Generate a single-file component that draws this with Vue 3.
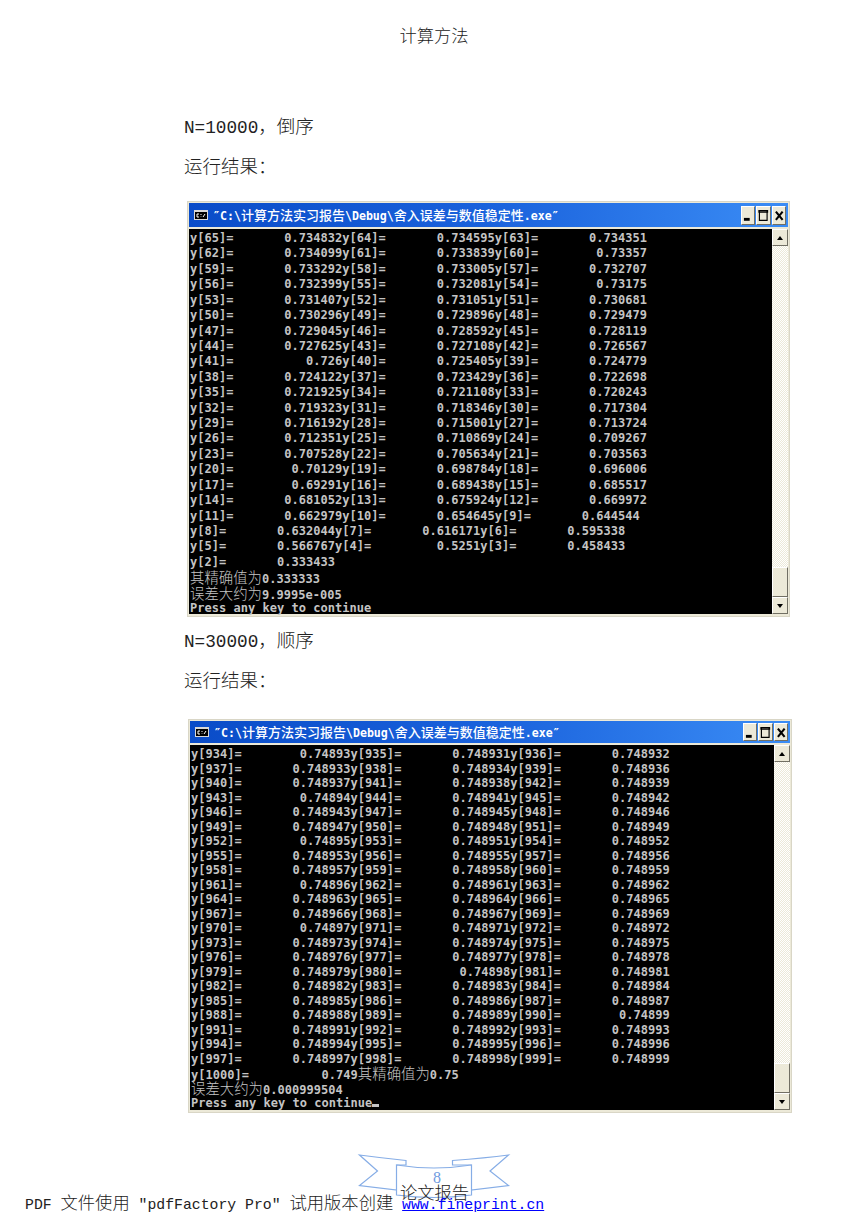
<script setup>
const row = (items) =>
  items.map(([i, v]) => `y[${i}]=` + String(v).padStart(15, ' ')).join('')

const split = (s) =>
  s.split(/([\u4e00-\u9fff，：]+)/).filter(Boolean).map((t) => ({ t, cjk: /[\u4e00-\u9fff，：]/.test(t) }))

const firstValues = `65 0.734832 64 0.734595 63 0.734351
62 0.734099 61 0.733839 60 0.73357
59 0.733292 58 0.733005 57 0.732707
56 0.732399 55 0.732081 54 0.73175
53 0.731407 52 0.731051 51 0.730681
50 0.730296 49 0.729896 48 0.729479
47 0.729045 46 0.728592 45 0.728119
44 0.727625 43 0.727108 42 0.726567
41 0.726 40 0.725405 39 0.724779
38 0.724122 37 0.723429 36 0.722698
35 0.721925 34 0.721108 33 0.720243
32 0.719323 31 0.718346 30 0.717304
29 0.716192 28 0.715001 27 0.713724
26 0.712351 25 0.710869 24 0.709267
23 0.707528 22 0.705634 21 0.703563
20 0.70129 19 0.698784 18 0.696006
17 0.69291 16 0.689438 15 0.685517
14 0.681052 13 0.675924 12 0.669972
11 0.662979 10 0.654645 9 0.644544
8 0.632044 7 0.616171 6 0.595338
5 0.566767 4 0.5251 3 0.458433
2 0.333433`

const secondValues = `934 0.74893 935 0.748931 936 0.748932
937 0.748933 938 0.748934 939 0.748936
940 0.748937 941 0.748938 942 0.748939
943 0.74894 944 0.748941 945 0.748942
946 0.748943 947 0.748945 948 0.748946
949 0.748947 950 0.748948 951 0.748949
952 0.74895 953 0.748951 954 0.748952
955 0.748953 956 0.748955 957 0.748956
958 0.748957 959 0.748958 960 0.748959
961 0.74896 962 0.748961 963 0.748962
964 0.748963 965 0.748964 966 0.748965
967 0.748966 968 0.748967 969 0.748969
970 0.74897 971 0.748971 972 0.748972
973 0.748973 974 0.748974 975 0.748975
976 0.748976 977 0.748977 978 0.748978
979 0.748979 980 0.74898 981 0.748981
982 0.748982 983 0.748983 984 0.748984
985 0.748985 986 0.748986 987 0.748987
988 0.748988 989 0.748989 990 0.74899
991 0.748991 992 0.748992 993 0.748993
994 0.748994 995 0.748995 996 0.748996
997 0.748997 998 0.748998 999 0.748999`

const parse = (block) =>
  block.split('\n').map((line) => {
    const p = line.trim().split(' ')
    const items = []
    for (let i = 0; i < p.length; i += 2) items.push([p[i], p[i + 1]])
    return row(items)
  })

const title = '″C:\\计算方法实习报告\\Debug\\舍入误差与数值稳定性.exe″'

const sections = [
  {
    heading: 'N=10000，倒序',
    variant: 'first',
    lines: [
      ...parse(firstValues),
      '其精确值为0.333333',
      '误差大约为9.9995e-005',
      'Press any key to continue',
    ],
    tail: 3,
  },
  {
    heading: 'N=30000，顺序',
    variant: 'second',
    lines: [
      ...parse(secondValues),
      row([['1000', '0.749']]) + '其精确值为0.75',
      '误差大约为0.000999504',
      'Press any key to continue',
    ],
    tail: 3,
    cursor: true,
  },
]
</script>

<template>
  <div class="page">
    <header class="running-head">计算方法</header>

    <section v-for="s in sections" :key="s.variant" class="section" :class="s.variant">
      <p class="body-line">
        <span v-for="(p, i) in split(s.heading)" :key="i" :class="{ han: p.cjk, latin: !p.cjk }">{{ p.t }}</span>
      </p>
      <p class="body-line second-line"><span class="han">运行结果：</span></p>

      <div class="window">
        <div class="titlebar">
          <svg class="app-icon" viewBox="0 0 14 10" width="14" height="10">
            <rect width="14" height="10" fill="#d8d8d8" />
            <rect x="1" y="2" width="12" height="7" fill="#000" />
            <path d="M3 4h2M3 4v3M3 7h2M7 4v1M7 6.5v.5M9 7l2-3" stroke="#fff" stroke-width="1" fill="none" />
          </svg>
          <span class="title-text">
            <span v-for="(p, i) in split(title)" :key="i" :class="{ 'title-han': p.cjk }">{{ p.t }}</span>
          </span>
          <div class="caption-buttons">
            <button class="cap">
              <svg viewBox="0 0 13 17" width="13" height="17"><rect x="2" y="11" width="6" height="3" fill="#000" /></svg>
            </button>
            <button class="cap">
              <svg viewBox="0 0 13 17" width="13" height="17"><path d="M2 3.5h9v1.5h-9zM2.5 4v9.5h8V4" fill="none" stroke="#000" stroke-width="1.2" /></svg>
            </button>
            <button class="cap">
              <svg viewBox="0 0 13 17" width="13" height="17"><path d="M3 4.5l7 8.5M10 4.5l-7 8.5" fill="none" stroke="#000" stroke-width="2.2" /></svg>
            </button>
          </div>
        </div>
        <div class="client">
          <div class="console">
            <div
              v-for="(line, li) in s.lines"
              :key="li"
              class="console-line"
              :class="{ tail: li >= s.lines.length - s.tail }"
            >
              <span v-for="(p, i) in split(line)" :key="i" :class="{ 'console-han': p.cjk }">{{ p.t }}</span>
              <span v-if="s.cursor && li === s.lines.length - 1" class="cursor"></span>
            </div>
          </div>
          <div class="scrollbar">
            <div class="arrow up"><span class="tri-up"></span></div>
            <div class="track"></div>
            <div class="thumb"></div>
            <div class="arrow"><span class="tri-down"></span></div>
          </div>
        </div>
      </div>
    </section>

    <svg class="ribbon" viewBox="0 0 190 60" width="190" height="60">
      <g fill="#fff" stroke="#86ade6" stroke-width="1.2" stroke-linejoin="miter">
        <path d="M19.5 10 Q42 13 66 15.5 V20 H57 V45 L19.5 40.5 L37.5 26 Z" />
        <path d="M168.5 10 Q146 13 112.5 15.5 V20 H131 V45 L168.5 40.5 L150 26 Z" />
        <path d="M56.5 20 Q94 26 131.5 20 V50 Q94 55 56.5 50 Z" />
      </g>
      <text x="97" y="38" text-anchor="middle" class="ribbon-number">8</text>
    </svg>

    <div class="ribbon-caption">论文报告</div>

    <footer class="watermark">
      <span class="latin-small">PDF{{ ' ' }}</span><span class="han-small">文件使用</span><span class="latin-small">{{ ' ″pdfFactory Pro″ ' }}</span><span class="han-small">试用版本创建</span><span class="latin-small">{{ ' ' }}</span><a class="latin-small link" href="#">www.fineprint.cn</a>
    </footer>
  </div>
</template>

<style>
html, body { margin: 0; background: #fff; }
</style>

<style scoped>
.page {
  position: relative;
  width: 868px;
  height: 1228px;
  overflow: hidden;
  background: #fff;
  color: #222;
  font-family: "Liberation Mono", "Noto Sans CJK SC", monospace;
  padding-top: 25px;
  box-sizing: border-box;
}

.running-head {
  text-align: center;
  font-family: "Noto Sans CJK SC", sans-serif;
  font-weight: 300;
  font-size: 17.3px;
  line-height: 20px;
  width: 868px;
}

.section { padding-left: 184px; }
.section.first { padding-top: 60px; }
.section.second { padding-top: 2px; }

.body-line {
  margin: 0;
  height: 40px;
  line-height: 40px;
  white-space: pre;
}
.first .second-line { margin-bottom: 16px; }
.second .second-line { margin-bottom: 20px; }

.han {
  font-family: "Noto Sans CJK SC", sans-serif;
  font-weight: 300;
  font-size: 18.5px;
}
.latin { font-size: 17.7px; }

.window {
  box-sizing: border-box;
  background: #ece9d8;
  border: 1px solid #d9d6c6;
  margin-left: 3px;
  padding: 1px 1px 2px;
}
.first .window { width: 603px; height: 416px; }
.second .window { width: 604px; height: 394px; margin-left: 4px; }

.titlebar {
  display: flex;
  align-items: center;
  height: 24px;
  background: linear-gradient(90deg, #0a4cc8 0%, #1a62dc 50%, #3a8cf5 100%);
  padding: 0 2px 0 5px;
  box-sizing: border-box;
}
.second .titlebar { height: 22px; }

.app-icon { flex: none; margin-right: 5px; }

.title-text {
  flex: 1;
  color: #fff;
  font-family: "DejaVu Sans Mono", monospace;
  font-weight: 700;
  font-size: 11.6px;
  white-space: pre;
  line-height: 18px;
}
.title-han {
  font-family: "Noto Sans CJK SC", sans-serif;
  font-weight: 500;
  font-size: 13px;
}

.caption-buttons { display: flex; gap: 1px; }
.cap {
  width: 14.5px;
  height: 19px;
  padding: 0;
  border: 1px solid;
  border-color: #fff #716f64 #716f64 #fff;
  background: #ece9d8;
  display: flex;
  align-items: center;
  justify-content: center;
  overflow: hidden;
}
.second .cap { height: 18px; }

.client {
  display: flex;
  height: 385px;
  margin-top: 2px;
  background: #000;
}
.second .client { height: 365px; }

.console {
  flex: 1;
  padding: 2px 0 0 1px;
  min-width: 0;
  color: #c4c4c4;
  font-family: "DejaVu Sans Mono", monospace;
  font-weight: 700;
  font-size: 12px;
  letter-spacing: 0.03px;
  white-space: pre;
}
.console-line { height: 15.43px; line-height: 15.43px; }
.second .console { padding-top: 2px; }
.second .console-line { height: 14.52px; line-height: 14.52px; }
.second .console-line.tail { height: 15px; line-height: 15px; }

.console-han {
  font-family: "Noto Sans CJK SC", sans-serif;
  font-weight: 300;
  font-size: 14.4px;
  line-height: 1;
  letter-spacing: 0;
}
.cursor {
  display: inline-block;
  width: 7px;
  height: 3px;
  background: #c4c4c4;
  vertical-align: baseline;
}

.scrollbar {
  flex: none;
  width: 16px;
  display: flex;
  flex-direction: column;
  background: #fff;
}
.arrow {
  flex: none;
  height: 17px;
  box-sizing: border-box;
  background: #ece9d8;
  border: 1px solid;
  border-color: #fff #716f64 #716f64 #fff;
  display: flex;
  align-items: center;
  justify-content: center;
}
.tri-up, .tri-down { width: 0; height: 0; border-left: 3.5px solid transparent; border-right: 3.5px solid transparent; }
.tri-up { border-bottom: 4px solid #000; }
.tri-down { border-top: 4px solid #000; }
.track {
  flex: 1;
  background: repeating-conic-gradient(#ece9d8 0 25%, #fff 0 50%) 0 0 / 2px 2px;
}
.thumb {
  flex: none;
  height: 30px;
  box-sizing: border-box;
  background: #ece9d8;
  border: 1px solid;
  border-color: #fff #716f64 #716f64 #fff;
}

.ribbon {
  position: absolute;
  left: 340px;
  top: 1145px;
}
.ribbon-number {
  font-family: "Liberation Serif", serif;
  font-size: 16px;
  fill: #6f9be0;
}

.ribbon-caption {
  position: absolute;
  left: 400px;
  top: 1182px;
  font-family: "Noto Sans CJK SC", sans-serif;
  font-weight: 300;
  font-size: 17.3px;
  line-height: 20px;
}

.watermark {
  position: absolute;
  left: 25px;
  top: 1192px;
  line-height: 20px;
  white-space: pre;
  color: #222;
}
.latin-small { font-size: 14.8px; }
.han-small {
  font-family: "Noto Sans CJK SC", sans-serif;
  font-weight: 300;
  font-size: 17.3px;
}
.link { color: #0000ff; text-decoration: underline; }
</style>
